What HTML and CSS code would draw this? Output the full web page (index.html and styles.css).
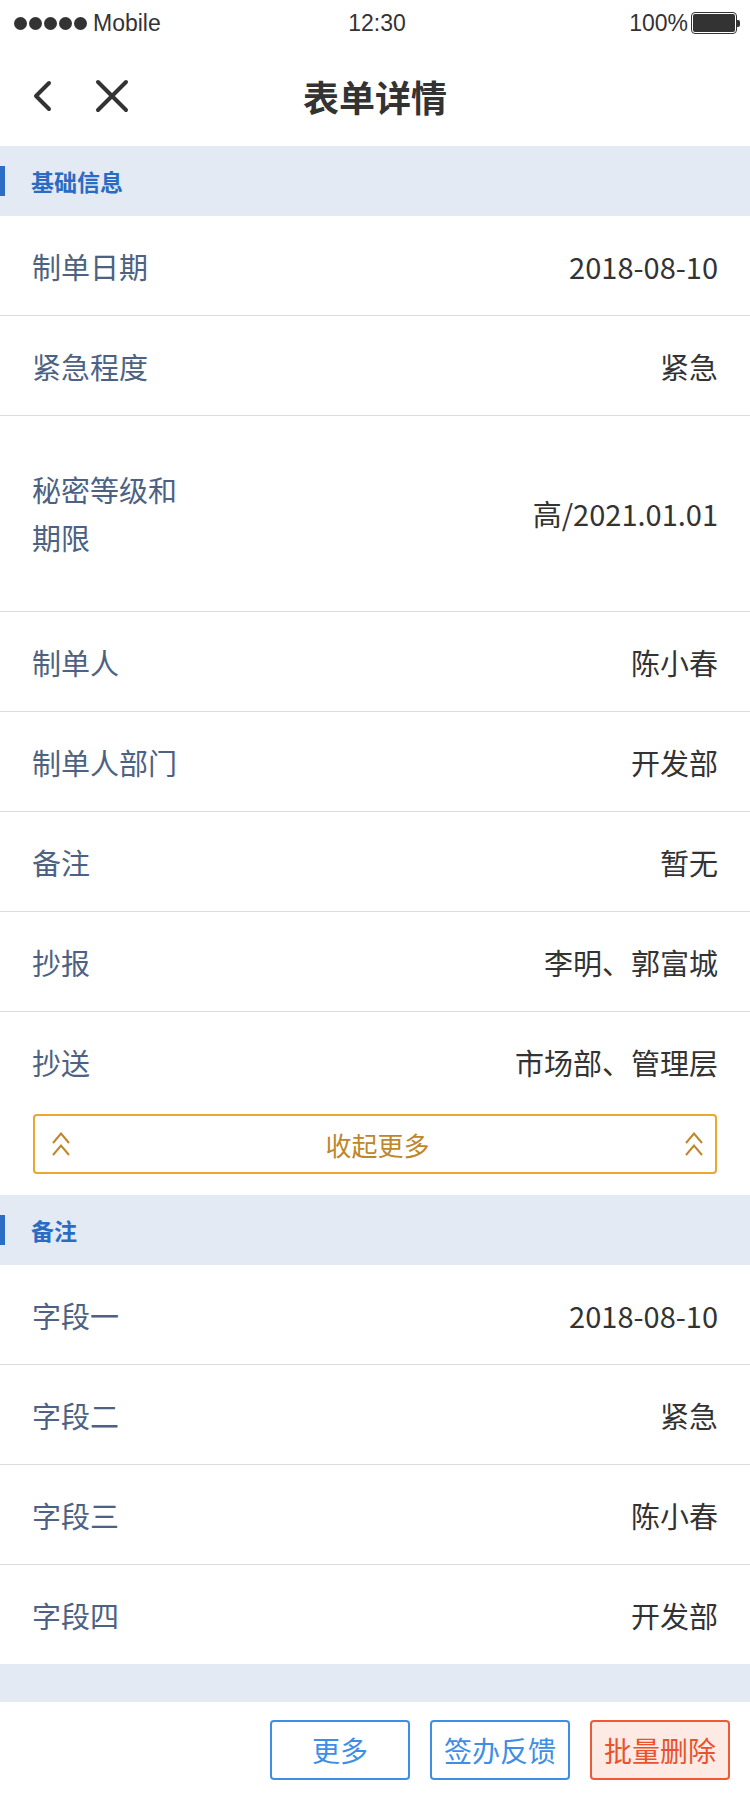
FILE: index.html
```html
<!DOCTYPE html>
<html lang="zh-CN">
<head>
  <meta charset="UTF-8">
  <meta name="viewport" content="width=750">
  <title>表单详情</title>
  <link rel="stylesheet" href="styles.css">
</head>
<body>
  <!-- 状态栏 -->
  <div class="status-bar">
    <div class="carrier">
      <span class="dots"><i></i><i></i><i></i><i></i><i></i></span>
      <span>Mobile</span>
    </div>
    <div class="clock">12:30</div>
    <div class="power">
      <span>100%</span>
      <span class="battery"><span class="battery-fill"></span></span>
      <span class="battery-tip"></span>
    </div>
  </div>

  <!-- 导航栏 -->
  <header class="nav-bar">
    <div class="nav-left">
      <svg class="icon-back" width="22" height="32" viewBox="0 0 22 32">
        <path d="M18 3 L5 16 L18 29" fill="none" stroke="#333" stroke-width="4" stroke-linecap="round" stroke-linejoin="round"/>
      </svg>
      <svg class="icon-close" width="34" height="34" viewBox="0 0 34 34">
        <path d="M3 3 L31 31 M31 3 L3 31" fill="none" stroke="#333" stroke-width="4" stroke-linecap="round"/>
      </svg>
    </div>
    <h1 class="nav-title">表单详情</h1>
    <div class="nav-right"></div>
  </header>

  <!-- 基础信息 -->
  <section class="block">
    <div class="block-title"><span class="mark"></span>基础信息</div>
    <div class="row"><span class="label">制单日期</span><span class="value">2018-08-10</span></div>
    <div class="row"><span class="label">紧急程度</span><span class="value">紧急</span></div>
    <div class="row row-tall"><span class="label">秘密等级和期限</span><span class="value">高/2021.01.01</span></div>
    <div class="row"><span class="label">制单人</span><span class="value">陈小春</span></div>
    <div class="row"><span class="label">制单人部门</span><span class="value">开发部</span></div>
    <div class="row"><span class="label">备注</span><span class="value">暂无</span></div>
    <div class="row"><span class="label">抄报</span><span class="value">李明、郭富城</span></div>
    <div class="row row-last"><span class="label">抄送</span><span class="value">市场部、管理层</span></div>
    <div class="collapse-wrap">
      <button type="button" class="collapse-btn">
        <svg width="18" height="24" viewBox="0 0 18 24">
          <path d="M1 11 L9 1.5 L17 11 M1 23 L9 13.5 L17 23" fill="none" stroke="#c0862a" stroke-width="2"/>
        </svg>
        <span>收起更多</span>
        <svg width="18" height="24" viewBox="0 0 18 24">
          <path d="M1 11 L9 1.5 L17 11 M1 23 L9 13.5 L17 23" fill="none" stroke="#c0862a" stroke-width="2"/>
        </svg>
      </button>
    </div>
  </section>

  <!-- 备注 -->
  <section class="block">
    <div class="block-title"><span class="mark"></span>备注</div>
    <div class="row"><span class="label">字段一</span><span class="value">2018-08-10</span></div>
    <div class="row"><span class="label">字段二</span><span class="value">紧急</span></div>
    <div class="row"><span class="label">字段三</span><span class="value">陈小春</span></div>
    <div class="row row-last"><span class="label">字段四</span><span class="value">开发部</span></div>
  </section>

  <div class="spacer"></div>

  <!-- 底部操作 -->
  <footer class="actions">
    <button type="button" class="btn">更多</button>
    <button type="button" class="btn">签办反馈</button>
    <button type="button" class="btn btn-danger">批量删除</button>
  </footer>
</body>
</html>
```

FILE: styles.css
```css
body {
  margin: 0;
  width: 750px;
  background: #fff;
  font-family: "Noto Sans CJK SC", "Noto Sans", sans-serif;
  color: #333;
}

/* 状态栏 */
.status-bar {
  height: 46px;
  display: flex;
  align-items: center;
  justify-content: space-between;
  padding: 0 10px 0 14px;
  font-family: "Liberation Sans", Arial, sans-serif;
  font-size: 23px;
  color: #333;
}

.carrier,
.power {
  display: flex;
  align-items: center;
  width: 220px;
}

.power {
  justify-content: flex-end;
}

.dots {
  display: flex;
  gap: 2px;
  margin-right: 6px;
}

.dots i {
  width: 13px;
  height: 13px;
  border-radius: 50%;
  background: #333;
}

.battery {
  width: 42px;
  height: 18px;
  margin-left: 3px;
  border: 1px solid #333;
  border-radius: 4px;
  padding: 1px;
}

.battery-fill {
  display: block;
  width: 100%;
  height: 100%;
  background: #333;
  border-radius: 2px;
}

.battery-tip {
  width: 3px;
  height: 7px;
  background: #333;
  border-radius: 0 2px 2px 0;
}

/* 导航栏 */
.nav-bar {
  height: 100px;
  display: grid;
  grid-template-columns: 1fr auto 1fr;
  align-items: center;
}

.nav-left {
  display: flex;
  align-items: center;
  padding-left: 31px;
  gap: 42px;
}

.nav-title {
  margin: 0;
  font-size: 36px;
  font-weight: bold;
  color: #333;
}

/* 分组 */
.block-title {
  height: 70px;
  display: flex;
  align-items: center;
  background: #e3eaf3;
  color: #2a6cc4;
  font-size: 23px;
  font-weight: bold;
}

.mark {
  width: 5px;
  height: 30px;
  margin-right: 26px;
  background: #2d6ec4;
}

.row {
  display: flex;
  align-items: center;
  justify-content: space-between;
  padding: 26px 32px 25px;
  border-bottom: 1px solid #dcdcdc;
  font-size: 29px;
  line-height: 48px;
}

.row-tall {
  padding: 49px 32px 50px;
}

.row-last {
  border-bottom: none;
}

.label {
  max-width: 155px;
  color: #4d6282;
}

.value {
  color: #333;
  text-align: right;
}

.collapse-wrap {
  padding: 3px 33px 21px;
}

.collapse-btn {
  width: 100%;
  height: 60px;
  display: flex;
  align-items: center;
  justify-content: space-between;
  padding: 0 12px 0 17px;
  background: #fff;
  border: 2px solid #eba634;
  border-radius: 4px;
  font-family: inherit;
  font-size: 26px;
  color: #c0862a;
}

.spacer {
  height: 38px;
  background: #e3eaf3;
}

/* 底部操作 */
.actions {
  height: 96px;
  display: flex;
  align-items: center;
  justify-content: flex-end;
  gap: 20px;
  padding-right: 20px;
}

.btn {
  width: 140px;
  height: 60px;
  padding: 0;
  background: #fff;
  border: 2px solid #3d8ee6;
  border-radius: 4px;
  font-family: inherit;
  font-size: 28px;
  color: #3d8ee6;
}

.btn-danger {
  background: #fdeae5;
  border-color: #ef5a34;
  color: #e9522d;
}
```
